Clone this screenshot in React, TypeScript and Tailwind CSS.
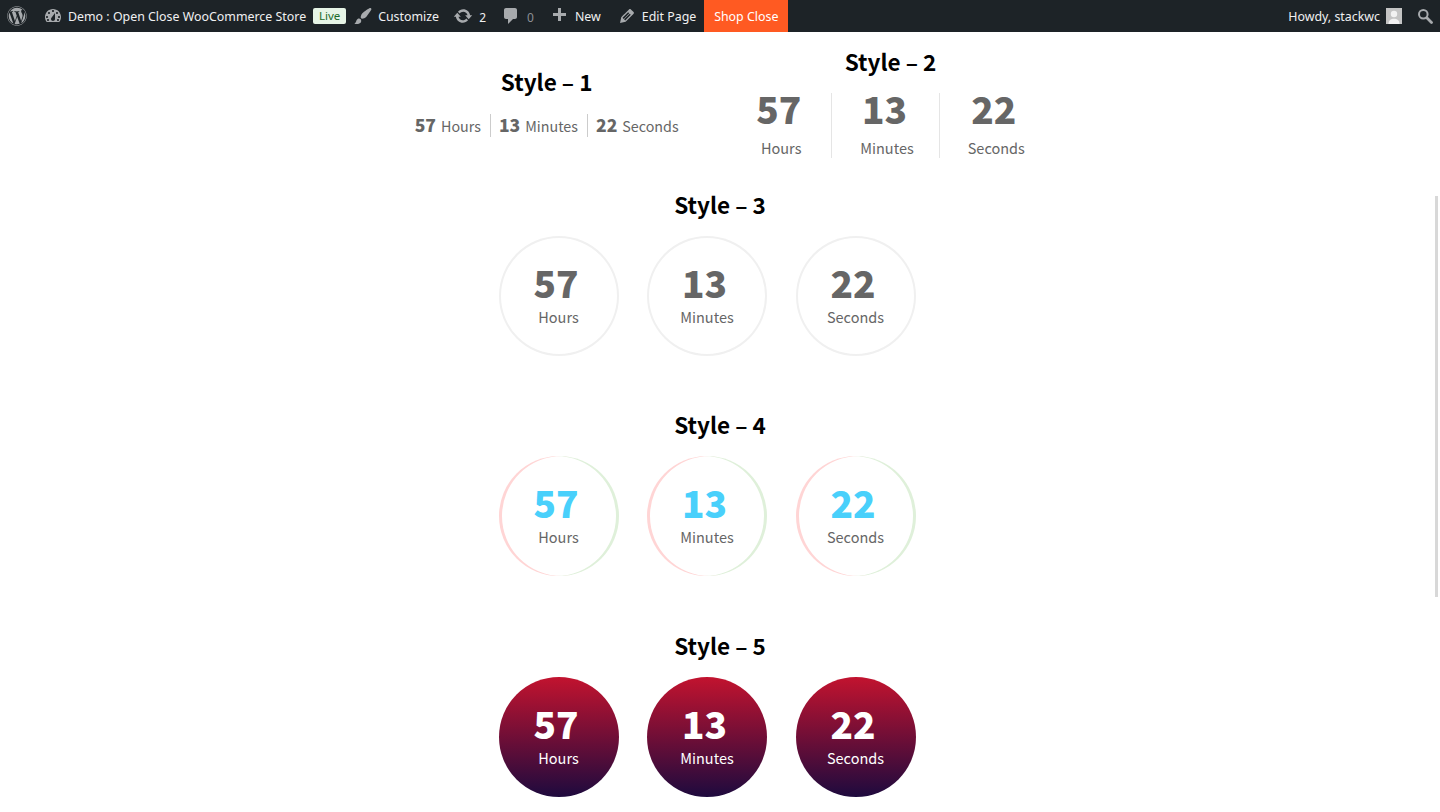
import { FaWordpress } from "react-icons/fa";

const sans = "font-['Noto_Sans_CJK_JP','Noto_Sans',sans-serif]";
const Icon = ({ d, className }: { d: string; className: string }) => (
  <svg viewBox="0 0 20 20" fill="currentColor" className={className}>
    <path d={d} fillRule="evenodd" />
  </svg>
);

const dash = "M3.76 16h12.48c1.1-1.37 1.76-3.11 1.76-5 0-4.42-3.58-8-8-8s-8 3.58-8 8c0 1.89.66 3.63 1.76 5zM10 4c.55 0 1 .45 1 1s-.45 1-1 1-1-.45-1-1 .45-1 1-1zM6 6c.55 0 1 .45 1 1s-.45 1-1 1-1-.45-1-1 .45-1 1-1zm8 0c.55 0 1 .45 1 1s-.45 1-1 1-1-.45-1-1 .45-1 1-1zm-5.37 5.55L12 7v6c0 1.1-.9 2-2 2s-2-.9-2-2c0-.57.24-1.08.63-1.45zM4 10c.55 0 1 .45 1 1s-.45 1-1 1-1-.45-1-1 .45-1 1-1zm12 0c.55 0 1 .45 1 1s-.45 1-1 1-1-.45-1-1 .45-1 1-1zM5 13c.55 0 1 .45 1 1s-.45 1-1 1-1-.45-1-1 .45-1 1-1zm10 0c.55 0 1 .45 1 1s-.45 1-1 1-1-.45-1-1 .45-1 1-1z";
const brush = "M18.33 3.57s.27-.8-.31-1.36c-.53-.52-1.22-.24-1.22-.24-.61.3-5.76 3.47-7.67 5.57-.86.96-2.06 3.79-1.09 4.82.92.98 3.96-.17 4.79-1 2.06-2.06 5.21-7.17 5.5-7.79zM1.4 17.65c2.37-1.56 1.46-3.41 3.23-4.64.93-.65 2.22-.62 3.08.29.63.67.8 2.57-.16 3.46-1.57 1.45-4 1.55-6.15.89z";
const update = "M10.2 3.28c3.53 0 6.43 2.61 6.92 6h2.08l-3.5 4-3.5-4h2.32c-.45-1.97-2.21-3.44-4.32-3.44-1.45 0-2.73.71-3.54 1.78L4.95 5.66C6.23 4.2 8.11 3.28 10.2 3.28zm-.4 13.44c-3.52 0-6.43-2.61-6.92-6H.8l3.5-4c1.17 1.33 2.33 2.67 3.5 4H5.48c.45 1.97 2.21 3.44 4.32 3.44 1.45 0 2.73-.71 3.54-1.78l1.71 1.95c-1.28 1.46-3.15 2.39-5.25 2.39z";
const comment = "M5 2h9c1.1 0 2 .9 2 2v7c0 1.1-.9 2-2 2h-2l-5 5v-5H5c-1.1 0-2-.9-2-2V4c0-1.1.9-2 2-2z";
const plus = "M17 7v3h-5v5H9v-5H4V7h5V2h3v5h5z";
const pencil = "M13.89 3.39l2.71 2.72c.46.46.42 1.24.03 1.64l-8.01 8.02-5.56 1.16 1.16-5.58s7.6-7.63 7.99-8.03c.39-.39 1.22-.39 1.68.07zm-2.73 2.79l-5.59 5.61 1.11 1.11 5.54-5.65zm-2.97 8.23l5.58-5.6-1.07-1.08-5.59 5.6z";

const units = [
  { n: "57", l: "Hours" },
  { n: "13", l: "Minutes" },
  { n: "22", l: "Seconds" },
];

function Heading({ children }: { children: string }) {
  return <h2 className="text-[22.5px] leading-[30px] font-semibold text-black text-center">{children}</h2>;
}

function Circles({ circle, num, label }: { circle: string; num: string; label: string }) {
  return (
    <div className="flex justify-center pr-[26px] gap-[28.5px] mt-[17px]">
      {units.map((u) => (
        <div key={u.l} className={`w-[120px] h-[120px] rounded-full flex flex-col items-center pt-[31px] ${circle}`}>
          <div className={`text-[37px] leading-[30px] font-black pr-[5px] ${num}`}>{u.n}</div>
          <div className={`text-[14.5px] leading-[22px] mt-[9px] ${label}`}>{u.l}</div>
        </div>
      ))}
    </div>
  );
}

export default function App() {
  return (
    <div className={`relative h-[812px] overflow-hidden bg-white ${sans}`}>
      <header className="flex h-[32px] items-center bg-[#1d2327] text-[12.4px] text-[#f0f0f1] font-['Noto_Sans','Open_Sans',sans-serif]">
        <FaWordpress className="ml-[7px] w-[20px] h-[20px] text-[#a7aaad]" />
        <Icon d={dash} className="ml-[16px] w-[20px] h-[20px] text-[#a7aaad]" />
        <span className="ml-[5px] mt-[3px] whitespace-nowrap">Demo : Open Close WooCommerce Store</span>
        <span className="ml-[7px] flex h-[16px] w-[33px] items-center justify-center rounded-[2px] bg-[#e6f4e6] text-[11.5px] text-[#1c6b2a]">Live</span>
        <Icon d={brush} className="ml-[7px] w-[20px] h-[20px] text-[#a7aaad]" />
        <span className="ml-[5px] mt-[3px]">Customize</span>
        <Icon d={update} className="ml-[14px] w-[20px] h-[20px] text-[#a7aaad]" />
        <span className="ml-[6px] mt-[3px] text-[12px]">2</span>
        <Icon d={comment} className="ml-[15px] w-[20px] h-[20px] text-[#a7aaad]" />
        <span className="ml-[6px] mt-[3px] text-[12px] text-[#8c8f94]">0</span>
        <Icon d={plus} className="ml-[15px] w-[20px] h-[20px] text-[#a7aaad]" />
        <span className="ml-[6px] mt-[3px]">New</span>
        <Icon d={pencil} className="ml-[16px] w-[20px] h-[20px] text-[#a7aaad]" />
        <span className="ml-[5px] mt-[3px]">Edit Page</span>
        <span className="ml-[8px] flex h-full w-[84px] items-center justify-center bg-[#ff5a22] pt-[3px] text-white">Shop Close</span>
        <span className="ml-auto mt-[3px]">Howdy, stackwc</span>
        <span className="ml-[6px] flex h-[16px] w-[16px] items-end justify-center overflow-hidden bg-[#c4c4c4]">
          <svg viewBox="0 0 16 16" className="h-[16px] w-[16px]" fill="#f2f2f2">
            <circle cx="8" cy="6" r="3.2" />
            <path d="M2.5 16c0-3.6 2.4-5.2 5.5-5.2s5.5 1.6 5.5 5.2z" />
          </svg>
        </span>
        <svg viewBox="0 0 16 16" className="ml-[15px] mr-[7px] h-[16px] w-[16px] text-[#a7aaad]" fill="none" stroke="currentColor">
          <circle cx="6.3" cy="6.3" r="4.3" strokeWidth="2" />
          <path d="M9.8 9.8l4.7 4.7" strokeWidth="2.8" strokeLinecap="round" />
        </svg>
      </header>

      <main>
        <div className="flex justify-center pt-[14px] pl-[27.5px] gap-[49.5px]">
          <section className="mt-[20px] flex flex-col items-center">
            <Heading>Style – 1</Heading>
            <div className="mt-[18px] flex items-center text-[14.3px] leading-[22px] text-[#666]">
              {units.map((u, i) => (
                <div key={u.l} className={`flex items-baseline ${i > 0 ? "ml-[9px] border-l border-[#ccc] pl-[8px]" : ""}`}>
                  <span className="mr-[5px] text-[17.5px] font-black">{u.n}</span>
                  <span>{u.l}</span>
                </div>
              ))}
            </div>
          </section>
          <section className="flex flex-col items-center">
            <Heading>Style – 2</Heading>
            <div className="mt-[17px] flex">
              {units.map((u, i) => (
                <div key={u.l} className={`flex h-[65px] flex-col items-center pl-[28px] ${i < 2 ? "pr-[25px]" : "pr-[28px]"} text-[#666] ${i > 0 ? "border-l border-[#e5e5e5]" : ""}`}>
                  <div className="pr-[5px] text-[37px] leading-[30px] font-black">{u.n}</div>
                  <div className="mt-[14px] text-[14.5px] leading-[22px]">{u.l}</div>
                </div>
              ))}
            </div>
          </section>
        </div>

        <section className="mt-[31px]">
          <Heading>Style – 3</Heading>
          <Circles circle="shadow-[inset_0_0_0_2px_#f0f0f0]" num="text-[#666]" label="text-[#666]" />
        </section>
        <section className="mt-[53px]">
          <Heading>Style – 4</Heading>
          <Circles circle="shadow-[inset_3px_0_0_#ffd5d5,inset_-3px_0_0_#dff0da]" num="text-[#49d0fb]" label="text-[#666]" />
        </section>
        <section className="mt-[54px]">
          <Heading>Style – 5</Heading>
          <Circles circle="bg-[linear-gradient(to_bottom,#c2132f,#1e0a3e)]" num="text-white" label="text-white" />
        </section>
      </main>

      <div className="absolute right-[2px] top-[196px] h-[401px] w-[3px] bg-[#d8d8d8]" />
    </div>
  );
}
